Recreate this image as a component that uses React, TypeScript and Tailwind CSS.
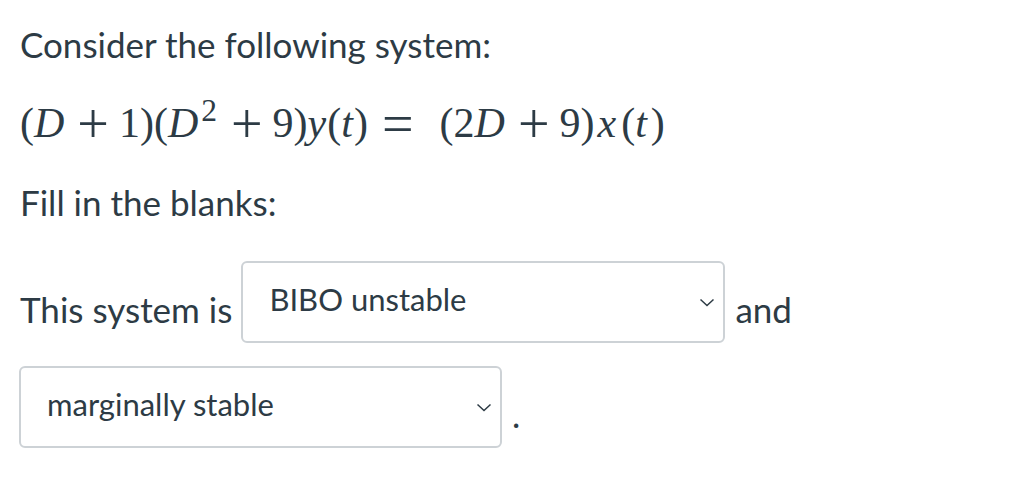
const Chevron = () => (
  <svg width="16" height="9" viewBox="0 0 16 9" fill="none" className="shrink-0">
    <path d="M1.5 1.5L8 7.5l6.5-6" stroke="#2d3b45" strokeWidth="1.5" />
  </svg>
);

const Select = ({ value, width }: { value: string; width: string }) => (
  <div
    className={`flex h-[82px] items-center justify-between rounded-[6px] border-2 border-[#cdd2d6] bg-white pl-[26px] pr-[8px] ${width}`}
  >
    <span className="mb-[5px] text-[31px] leading-none">{value}</span>
    <Chevron />
  </div>
);

// operators: larger glyph + wide spacing, like a math renderer
const Op = ({ c, wide }: { c: string; wide?: boolean }) => (
  <span
    className={`relative top-[6px] text-[56px] leading-[0] ${wide ? 'ml-[14px] mr-[26px]' : 'mx-[10px]'}`}
  >
    {c}
  </span>
);

const V = ({ c, extra }: { c: string; extra: string }) => <i className={extra}>{c}</i>;

export default function App() {
  return (
    <div
      className="min-h-[500px] bg-white pl-5 pt-[23px] text-[#2d3b45]"
      style={{ fontFamily: 'Lato, "Liberation Sans", sans-serif' }}
    >
      <p className="text-[35px] leading-[42px]">Consider the following system:</p>

      <p
        className="mt-[34px] whitespace-nowrap text-[42px] leading-[48px]"
        style={{ fontFamily: '"Liberation Serif", serif' }}
      >
        (<V c="D" extra="mr-[3px]" />
        <Op c="+" />
        1)(<V c="D" extra="mr-[2px]" />
        <sup className="ml-[1px] mr-[4px]">2</sup>
        <Op c="+" />
        9)<V c="y" extra="mr-[1px]" />(<V c="t" extra="mr-[1px]" />)
        <Op c="=" wide />
        (2<V c="D" extra="mr-[3px]" />
        <Op c="+" />
        9)<V c="x" extra="ml-[3px] mr-[5px]" />(<V c="t" extra="mr-[4px]" />)
      </p>

      <p className="mt-[34px] text-[35px] leading-[42px]">Fill in the blanks:</p>

      <div className="mt-[38px] flex items-end text-[35px]">
        <span className="mb-[16px] mr-[9px] leading-none">This system is</span>
        <Select value="BIBO unstable" width="w-[484px]" />
        <span className="mb-[16px] ml-[10px] leading-none">and</span>
      </div>

      <div className="-ml-px mt-[23px] flex items-end text-[35px]">
        <Select value="marginally stable" width="w-[483px]" />
        <span className="mb-[16px] ml-[10px] leading-none">.</span>
      </div>
    </div>
  );
}
